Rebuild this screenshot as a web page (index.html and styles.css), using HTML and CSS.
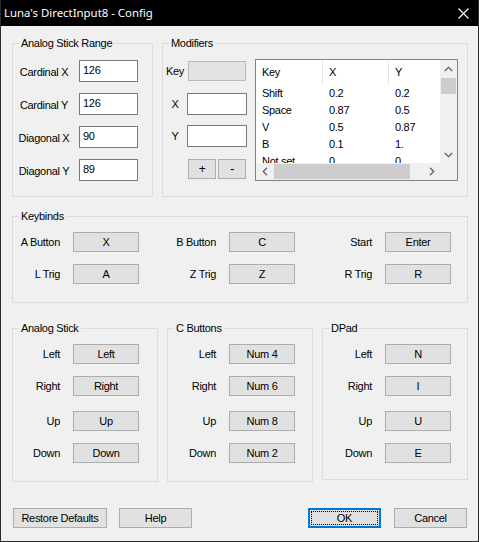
FILE: index.html
```html
<!DOCTYPE html>
<html>
<head>
<meta charset="utf-8">
<link rel="stylesheet" href="styles.css">
</head>
<body>
<div class="window">
  <div class="titlebar">
    <span class="title">Luna's DirectInput8 - Config</span>
    <svg class="close" width="11" height="11" viewBox="0 0 11 11"><path d="M0.5 0.5 L10.5 10.5 M10.5 0.5 L0.5 10.5" stroke="#fff" stroke-width="1.1" fill="none"/></svg>
  </div>
  <div class="content">
    <div class="row-top">
      <div class="group range">
        <div class="legend">Analog Stick Range</div>
        <div class="range-grid">
          <span class="lbl-c">Cardinal X</span><div class="edit">126</div>
          <span class="lbl-c">Cardinal Y</span><div class="edit">126</div>
          <span class="lbl-c">Diagonal X</span><div class="edit">90</div>
          <span class="lbl-c">Diagonal Y</span><div class="edit">89</div>
        </div>
      </div>
      <div class="group modifiers">
        <div class="legend">Modifiers</div>
        <div class="mod-body">
          <div class="mod-left">
            <div class="mod-row key-row"><span class="mod-lbl">Key</span><div class="keyfield"></div></div>
            <div class="mod-row x-row"><span class="mod-lbl">X</span><div class="edit mod-edit"></div></div>
            <div class="mod-row y-row"><span class="mod-lbl">Y</span><div class="edit mod-edit"></div></div>
            <div class="mod-row pm-row"><span class="mod-lbl"></span><div class="btn pm">+</div><div class="btn pm">-</div></div>
          </div>
          <div class="list">
            <div class="list-content">
              <div class="lrow head"><span class="c1">Key</span><span class="c2">X</span><span class="c3">Y</span></div>
              <div class="lrow"><span class="c1">Shift</span><span class="c2">0.2</span><span class="c3">0.2</span></div>
              <div class="lrow"><span class="c1">Space</span><span class="c2">0.87</span><span class="c3">0.5</span></div>
              <div class="lrow"><span class="c1">V</span><span class="c2">0.5</span><span class="c3">0.87</span></div>
              <div class="lrow"><span class="c1">B</span><span class="c2">0.1</span><span class="c3">1.</span></div>
              <div class="lrow"><span class="c1">Not set</span><span class="c2">0</span><span class="c3">0</span></div>
            </div>
            <div class="vscroll">
              <div class="sb-btn"><svg width="9" height="6" viewBox="0 0 9 6"><path d="M0.8 5 L4.5 1.3 L8.2 5" stroke="#606060" stroke-width="1.3" fill="none"/></svg></div>
              <div class="vthumb"></div>
              <div class="sb-fill"></div>
              <div class="sb-btn"><svg width="9" height="6" viewBox="0 0 9 6"><path d="M0.8 1 L4.5 4.7 L8.2 1" stroke="#606060" stroke-width="1.3" fill="none"/></svg></div>
            </div>
            <div class="hscroll">
              <div class="sb-btn"><svg width="6" height="9" viewBox="0 0 6 9"><path d="M5 0.8 L1.3 4.5 L5 8.2" stroke="#606060" stroke-width="1.3" fill="none"/></svg></div>
              <div class="hthumb"></div>
              <div class="sb-fill"></div>
              <div class="sb-btn"><svg width="6" height="9" viewBox="0 0 6 9"><path d="M1 0.8 L4.7 4.5 L1 8.2" stroke="#606060" stroke-width="1.3" fill="none"/></svg></div>
            </div>
            <div class="corner"></div>
          </div>
        </div>
      </div>
    </div>

    <div class="group keybinds">
      <div class="legend">Keybinds</div>
      <div class="kb-grid">
        <span class="lbl-r">A Button</span><div class="btn kb">X</div>
        <span class="lbl-r">B Button</span><div class="btn kb">C</div>
        <span class="lbl-r">Start</span><div class="btn kb">Enter</div>
        <span class="lbl-r">L Trig</span><div class="btn kb">A</div>
        <span class="lbl-r">Z Trig</span><div class="btn kb">Z</div>
        <span class="lbl-r">R Trig</span><div class="btn kb">R</div>
      </div>
    </div>

    <div class="row-bottom">
      <div class="group dir">
        <div class="legend">Analog Stick</div>
        <div class="dir-body">
          <div class="dir-row"><span class="lbl-r dl">Left</span><div class="btn kb">Left</div></div>
          <div class="dir-row"><span class="lbl-r dl">Right</span><div class="btn kb">Right</div></div>
          <div class="dir-row up"><span class="lbl-r dl">Up</span><div class="btn kb">Up</div></div>
          <div class="dir-row"><span class="lbl-r dl">Down</span><div class="btn kb">Down</div></div>
        </div>
      </div>
      <div class="group dir cbtn">
        <div class="legend">C Buttons</div>
        <div class="dir-body">
          <div class="dir-row"><span class="lbl-r dl">Left</span><div class="btn kb">Num 4</div></div>
          <div class="dir-row"><span class="lbl-r dl">Right</span><div class="btn kb">Num 6</div></div>
          <div class="dir-row up"><span class="lbl-r dl">Up</span><div class="btn kb">Num 8</div></div>
          <div class="dir-row"><span class="lbl-r dl">Down</span><div class="btn kb">Num 2</div></div>
        </div>
      </div>
      <div class="group dir dpad">
        <div class="legend">DPad</div>
        <div class="dir-body">
          <div class="dir-row"><span class="lbl-r dl">Left</span><div class="btn kb">N</div></div>
          <div class="dir-row"><span class="lbl-r dl">Right</span><div class="btn kb">I</div></div>
          <div class="dir-row up"><span class="lbl-r dl">Up</span><div class="btn kb">U</div></div>
          <div class="dir-row"><span class="lbl-r dl">Down</span><div class="btn kb">E</div></div>
        </div>
      </div>
    </div>

    <div class="actions">
      <div class="btn restore">Restore Defaults</div>
      <div class="btn help">Help</div>
      <div class="spacer"></div>
      <div class="btn ok"><span class="focus">OK</span></div>
      <div class="btn cancel">Cancel</div>
    </div>
  </div>
</div>
</body>
</html>
```

FILE: styles.css
```css
* { box-sizing: border-box; }
html, body { margin: 0; padding: 0; background: #f0f0f0; }
body {
  font-family: "Liberation Sans", Arial, sans-serif;
  font-size: 11px;
  letter-spacing: -0.3px;
  color: #000;
}
.window {
  width: 479px;
  height: 542px;
  border: 1px solid #2b2b2b;
  border-top: none;
  background: #f0f0f0;
  overflow: hidden;
}
.titlebar {
  height: 26px;
  margin: 0 -1px;
  background: #000;
  display: flex;
  align-items: center;
  padding: 0 0 1px 4px;
}
.title {
  color: #fff;
  font-family: "Noto Sans", sans-serif;
  font-size: 11.4px;
  letter-spacing: 0;
  flex: 1;
}
.close { margin-right: 10px; margin-top: 1px; }

.content {
  padding: 17px 10px 0 11px;
}
.group {
  border: 1px solid #dcdcdc;
}
.legend {
  height: 13px;
  line-height: 13px;
  margin: -7px 0 -6px 6px;
  padding: 0 2px;
  background: #f0f0f0;
  width: fit-content;
}
.row-top {
  display: flex;
  gap: 9px;
}
.range { width: 141px; height: 154px; }
.modifiers { width: 306px; height: 154px; }

.range-grid {
  display: grid;
  grid-template-columns: 62px 59px;
  grid-auto-rows: 22px;
  column-gap: 4px;
  row-gap: 11px;
  padding-top: 16px;
}
.lbl-c {
  text-align: center;
  line-height: 24px;
  white-space: nowrap;
}
.edit {
  background: #fff;
  border: 1px solid #7a7a7a;
  height: 22px;
  line-height: 18px;
  padding-left: 3px;
}

.mod-body { display: flex; }
.mod-left { width: 84px; padding-top: 17px; }
.mod-row { display: flex; align-items: center; }
.mod-lbl { width: 24px; text-align: center; }
.keyfield {
  width: 58px;
  height: 20px;
  margin-left: 1px;
  background: #e3e3e3;
  border: 1px solid #b9b9b9;
}
.mod-edit { width: 60px; }
.x-row { margin-top: 12px; }
.y-row { margin-top: 10px; }
.pm-row { margin-top: 12px; }
.pm { width: 28px; height: 21px; margin-left: 1px; font-size: 12px; }
.pm + .pm { margin-left: 2px; }

.btn {
  background: #e1e1e1;
  border: 1px solid #adadad;
  display: flex;
  align-items: center;
  justify-content: center;
  height: 20px;
  white-space: nowrap;
}

.list {
  margin-left: 8px;
  margin-top: 15px;
  width: 203px;
  height: 122px;
  border: 1px solid #828282;
  background: #fff;
  display: grid;
  grid-template-columns: 184px 17px;
  grid-template-rows: 103px 17px;
  overflow: hidden;
}
.list-content { overflow: hidden; }
.lrow { display: flex; height: 17px; line-height: 17px; }
.lrow.head { height: 25px; line-height: 25px; }
.lrow span { padding-left: 6px; flex: none; white-space: nowrap; }
.c1 { width: 67px; }
.c2 { width: 66px; }
.c3 { width: 60px; }
.head .c1, .head .c2 { border-right: 1px solid #e5e5e5; }
.head span { height: 24px; margin-top: 1px; line-height: 23px; }

.vscroll {
  background: #f0f0f0;
  display: flex;
  flex-direction: column;
}
.hscroll {
  background: #f0f0f0;
  display: flex;
}
.sb-btn {
  width: 17px;
  height: 17px;
  flex: none;
  display: flex;
  align-items: center;
  justify-content: center;
}
.vthumb {
  margin: 1px 1px 0 1px;
  height: 16px;
  background: #cdcdcd;
  flex: none;
}
.hthumb {
  margin: 1px 0 1px 1px;
  width: 136px;
  background: #cdcdcd;
  flex: none;
}
.sb-fill { flex: 1; }
.corner { background: #f0f0f0; }

.keybinds { height: 87px; margin-top: 19px; }
.kb-grid {
  display: grid;
  grid-template-columns: 60px 66px 90px 66px 90px 66px;
  grid-auto-rows: 20px;
  row-gap: 12px;
  padding-top: 15px;
}
.lbl-r {
  text-align: right;
  padding-right: 13px;
  line-height: 21px;
  white-space: nowrap;
}
.kb { width: 66px; }

.row-bottom {
  display: flex;
  justify-content: space-between;
  margin-top: 25px;
}
.dir { width: 146px; height: 154px; }
.dpad { height: 152px; }
.dir-body { padding-top: 15px; }
.dir-row { display: flex; height: 20px; margin-top: 12px; }
.dir-row:first-child { margin-top: 0; }
.dir-row.up { margin-top: 15px; }
.dl { width: 60px; flex: none; }
.cbtn .dl { width: 61px; }
.dpad .dl { width: 62px; }

.actions {
  display: flex;
  margin-top: 26px;
  padding: 0 1px 0 1px;
}
.restore { width: 94px; }
.help { width: 73px; margin-left: 12px; }
.spacer { flex: 1; }
.ok {
  width: 73px;
  border: 2px solid #0078d7;
  padding: 1px;
}
.focus {
  display: flex;
  align-items: center;
  justify-content: center;
  width: 100%;
  height: 100%;
  border: 1px dotted #000;
}
.cancel { width: 73px; margin-left: 13px; }
```
